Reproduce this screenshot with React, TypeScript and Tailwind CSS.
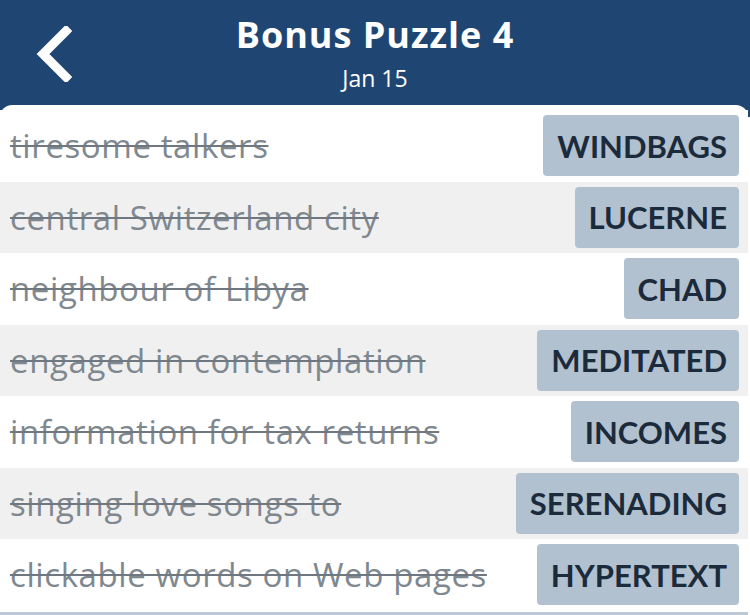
const clues = [
  { clue: "tiresome talkers", answer: "WINDBAGS" },
  { clue: "central Switzerland city", answer: "LUCERNE" },
  { clue: "neighbour of Libya", answer: "CHAD" },
  { clue: "engaged in contemplation", answer: "MEDITATED" },
  { clue: "information for tax returns", answer: "INCOMES" },
  { clue: "singing love songs to", answer: "SERENADING" },
  { clue: "clickable words on Web pages", answer: "HYPERTEXT" },
];

export default function App() {
  return (
    <div
      className="w-[750px] h-[615px] overflow-hidden bg-white flex flex-col"
      style={{ fontFamily: '"Open Sans", "Noto Sans", sans-serif' }}
    >
      {/* Header */}
      <div className="relative h-[117px] shrink-0 flex flex-col items-center bg-[#1f4672] text-white">
        <button className="absolute left-[32px] top-[26px]">
          <svg width="40" height="56" viewBox="0 0 40 56" fill="none">
            <path
              d="M34 5 L11 28 L34 51"
              stroke="white"
              strokeWidth="9"
              strokeLinecap="square"
              strokeLinejoin="miter"
            />
          </svg>
        </button>
        <h1 className="mt-[11px] text-[36px] leading-[48px] font-bold tracking-[1px]">
          Bonus Puzzle 4
        </h1>
        <p className="mt-[5px] text-[23px] leading-[28px]">Jan 15</p>
      </div>

      {/* Clue list */}
      <div className="relative -mt-[12px] flex-1 bg-white rounded-t-[12px] pt-[5px] mr-[2px]">
        {clues.map((c, i) => (
          <div
            key={c.answer}
            className={`h-[71.5px] flex items-center justify-between pl-[10px] pr-[9px] ${
              i % 2 === 1 ? "bg-[#f0f0f0]" : "bg-white"
            }`}
          >
            <span className="text-[33px] tracking-[0.6px] text-[#80888f] line-through decoration-[2px] decoration-[#6f7880] whitespace-nowrap">
              {c.clue}
            </span>
            <span
              className="h-[61px] flex items-center pl-[14px] pr-[12px] rounded-[4px] bg-[#b1c1d0] text-[#1c2b3b] text-[31px] font-bold"
              style={{ fontFamily: "Lato, sans-serif" }}
            >
              {c.answer}
            </span>
          </div>
        ))}
        <div className="mt-[1.5px] h-[3px] bg-[#bcc8d3]" />
      </div>
    </div>
  );
}
